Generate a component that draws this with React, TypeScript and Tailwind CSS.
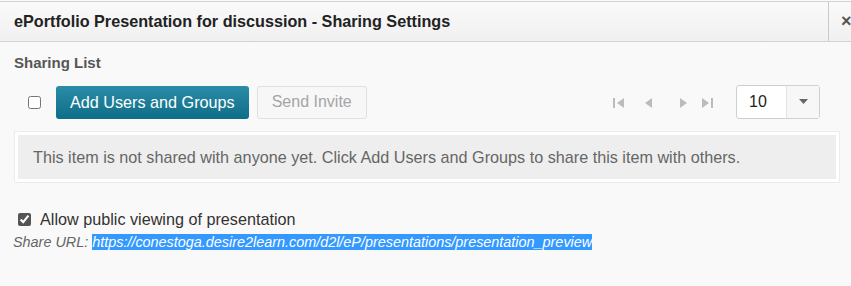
import React from "react";

const PagerIcon = ({ dir, bar }: { dir: "left" | "right"; bar?: boolean }) => (
  <svg width="14" height="14" viewBox="0 0 14 14" className="text-[#bcbcbc]">
    {dir === "left" ? (
      <>
        {bar && <rect x="1" y="2" width="2" height="10" fill="currentColor" />}
        <path d="M12 2 L5 7 L12 12 Z" fill="currentColor" />
      </>
    ) : (
      <>
        <path d="M2 2 L9 7 L2 12 Z" fill="currentColor" />
        {bar && <rect x="11" y="2" width="2" height="10" fill="currentColor" />}
      </>
    )}
  </svg>
);

export default function App() {
  return (
    <div className="w-[851px] h-[286px] bg-[#f9f9f9] overflow-hidden font-['Liberation_Sans',Arial,sans-serif]">
      {/* Dialog title */}
      <div className="flex h-[41px] border-t border-b border-[#d3d3d3] bg-gradient-to-b from-[#fafafa] to-[#f0f0f0] mt-[1px]">
        <div className="flex-1 flex items-center pl-[14px] text-[16.2px] font-bold text-[#222]">
          ePortfolio Presentation for discussion - Sharing Settings
        </div>
        <div className="w-[23px] border-l border-[#c9c9c9] flex items-center pl-[12px] text-[18px] font-bold text-[#555]">
          ×
        </div>
      </div>

      <div className="pl-[14px] pr-[12px]">
        <div className="pt-[12px] text-[15px] font-bold text-[#565656] leading-[18px]">Sharing List</div>

        {/* toolbar */}
        <div className="flex items-center mt-[13px] h-[34px]">
          <input type="checkbox" className="ml-[14px] w-[13px] h-[13px] accent-[#ddd]" />
          <button className="ml-[15px] h-[33px] px-[14px] rounded-[3px] bg-gradient-to-b from-[#2a8ca7] to-[#0d6e88] text-white text-[16.2px]">
            Add Users and Groups
          </button>
          <button className="ml-[8px] h-[33px] px-[14px] rounded-[3px] border border-[#e0e0e0] bg-[#f7f7f7] text-[#a5a5a5] text-[16px]">
            Send Invite
          </button>
          <div className="flex-1" />
          <div className="flex items-center mr-[22px] mt-[2px]">
            <PagerIcon dir="left" bar />
            <span className="ml-[14px]"><PagerIcon dir="left" /></span>
            <span className="ml-[24px]"><PagerIcon dir="right" /></span>
            <span className="ml-[8px]"><PagerIcon dir="right" bar /></span>
          </div>
          <div className="flex h-[34px] w-[84px] border border-[#cfcfcf] rounded-[3px] bg-white mr-[19px]">
            <div className="flex-1 flex items-center pl-[12px] text-[16px] text-[#222]">10</div>
            <div className="w-[33px] border-l border-[#e3e3e3] bg-[#f7f7f7] flex items-center justify-center">
              <svg width="9" height="6" viewBox="0 0 9 6">
                <path d="M0 0 L9 0 L4.5 5 Z" fill="#666" />
              </svg>
            </div>
          </div>
        </div>

        {/* empty message */}
        <div className="mt-[12px] w-[826px] border border-[#ececec] bg-white p-[3px]">
          <div className="h-[44px] bg-[#eeeeee] flex items-center pl-[15px] text-[16.2px] text-[#666]">
            This item is not shared with anyone yet. Click Add Users and Groups to share this item with others.
          </div>
        </div>

        {/* public viewing */}
        <label className="flex items-center mt-[24px] ml-[4px] text-[16.2px] text-[#333]">
          <input type="checkbox" defaultChecked className="w-[13px] h-[13px] accent-[#555]" />
          <span className="ml-[9px]">Allow public viewing of presentation</span>
        </label>
        <div className="mt-[3px] -ml-[1px] text-[14.4px] italic text-[#666] leading-[16px]">
          Share URL:{" "}
          <span className="bg-[#3399ff] text-white">
            https://conestoga.desire2learn.com/d2l/eP/presentations/presentation_preview
          </span>
        </div>
      </div>
    </div>
  );
}
